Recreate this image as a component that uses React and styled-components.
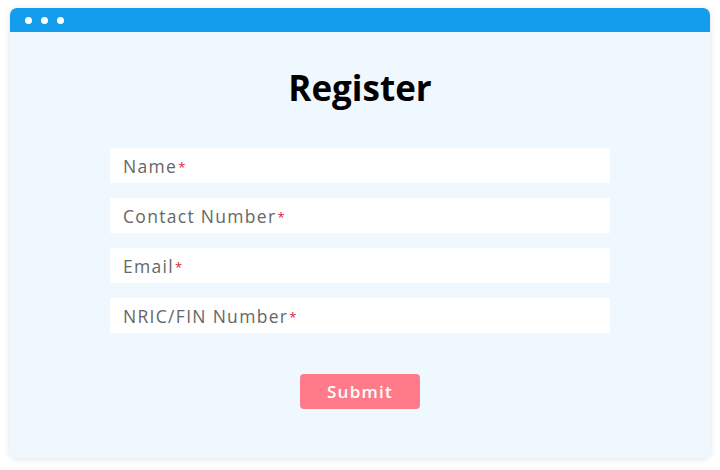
import styled, { createGlobalStyle } from "styled-components";

const Global = createGlobalStyle`
  html, body { margin: 0; padding: 0; background: #ffffff; }
  body { font-family: "Open Sans", "Liberation Sans", sans-serif; }
`;

const Page = styled.div`
  padding: 8px 10px 12px 10px;
`;

const Window = styled.div`
  width: 700px;
  height: 450px;
  border-radius: 7px;
  overflow: hidden;
  background: #eff8ff;
  box-shadow: 0 1px 6px rgba(0, 0, 0, 0.12);
  display: flex;
  flex-direction: column;
`;

const TitleBar = styled.div`
  height: 24px;
  background: #149dec;
  display: flex;
  align-items: center;
  gap: 9px;
  padding-left: 15px;
  flex-shrink: 0;
`;

const Dot = styled.span`
  width: 7px;
  height: 7px;
  border-radius: 50%;
  background: #ffffff;
`;

const Body = styled.div`
  display: flex;
  flex-direction: column;
  align-items: center;
`;

const Heading = styled.h1`
  margin: 33px 0 0 0;
  font-size: 35px;
  font-weight: 700;
  line-height: 46px;
  color: #000;
`;

const Form = styled.form`
  margin-top: 37px;
  display: flex;
  flex-direction: column;
  align-items: center;
  gap: 15px;
`;

const Field = styled.div`
  width: 500px;
  height: 35px;
  background: #ffffff;
  box-sizing: border-box;
  padding-left: 13px;
  display: flex;
  align-items: center;
  font-size: 17.5px;
  letter-spacing: 1.3px;
  color: #666666;
`;

const Star = styled.span`
  color: #d81b3a;
  font-size: 13px;
  letter-spacing: 0;
  margin-left: 1px;
  position: relative;
  top: 1px;
`;

const SubmitButton = styled.button`
  margin-top: 26px;
  width: 120px;
  height: 35px;
  border: 0;
  border-radius: 4px;
  background: #ff7b8a;
  color: #ffffff;
  font-family: "Open Sans", "Liberation Sans", sans-serif;
  font-size: 17px;
  font-weight: 600;
  letter-spacing: 1.3px;
  cursor: pointer;
`;

const fields = ["Name", "Contact Number", "Email", "NRIC/FIN Number"];

export default function App() {
  return (
    <Page>
      <Global />
      <Window>
        <TitleBar>
          <Dot />
          <Dot />
          <Dot />
        </TitleBar>
        <Body>
          <Heading>Register</Heading>
          <Form onSubmit={(e) => e.preventDefault()}>
            {fields.map((f) => (
              <Field key={f}>
                {f}
                <Star>*</Star>
              </Field>
            ))}
            <SubmitButton type="submit">Submit</SubmitButton>
          </Form>
        </Body>
      </Window>
    </Page>
  );
}
